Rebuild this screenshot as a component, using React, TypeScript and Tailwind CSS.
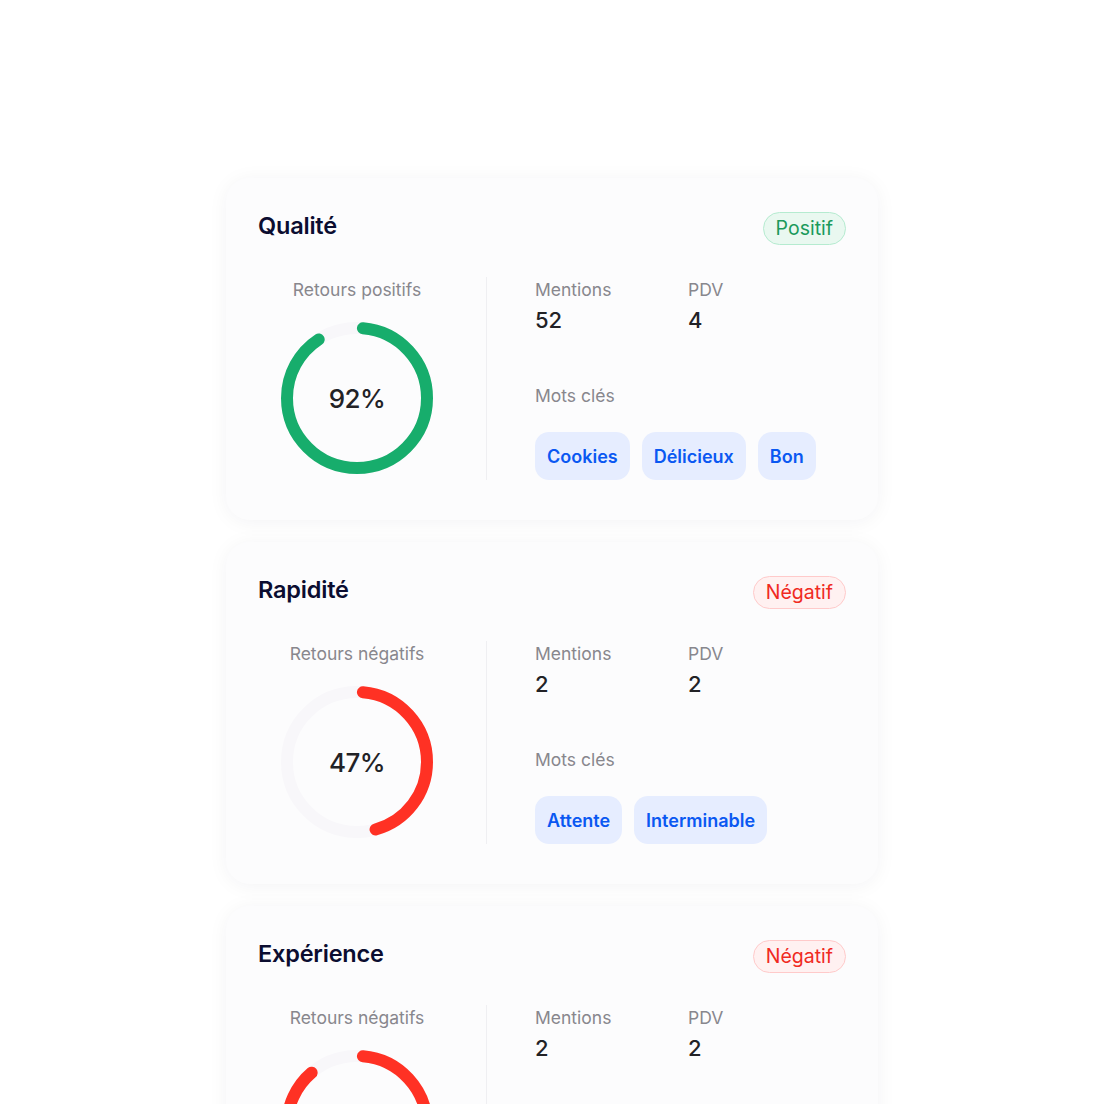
type Card = {
	title: string
	tone: "pos" | "neg"
	label: string
	percent: number
	mentions: number
	pdv: number
	keywords: string[]
}

const cards: Card[] = [
	{ title: "Qualité", tone: "pos", label: "Retours positifs", percent: 92, mentions: 52, pdv: 4, keywords: ["Cookies", "Délicieux", "Bon"] },
	{ title: "Rapidité", tone: "neg", label: "Retours négatifs", percent: 47, mentions: 2, pdv: 2, keywords: ["Attente", "Interminable"] },
	{ title: "Expérience", tone: "neg", label: "Retours négatifs", percent: 90, mentions: 2, pdv: 2, keywords: ["Attente"] },
]

function Donut({ percent, color }: { percent: number; color: string }) {
	const r = 70
	const c = 2 * Math.PI * r
	// keep the round caps inside the percent span
	const cap = 6
	const len = (c * percent) / 100 - 2 * cap
	return (
		<div className="relative w-[152px] h-[152px]">
			<svg width="152" height="152" viewBox="0 0 152 152" className="-rotate-90">
				<circle cx="76" cy="76" r={r} fill="none" stroke="#f8f7fa" strokeWidth="12" />
				<circle
					cx="76"
					cy="76"
					r={r}
					fill="none"
					stroke={color}
					strokeWidth="12"
					strokeLinecap="round"
					strokeDasharray={`${len} ${c}`}
					strokeDashoffset={-cap}
				/>
			</svg>
			<div className="absolute inset-0 flex items-center justify-center text-[26px] font-medium tracking-[-0.5px] text-[#222226]">
				{percent}%
			</div>
		</div>
	)
}

function SentimentCard({ card }: { card: Card }) {
	const pos = card.tone === "pos"
	return (
		<div className="h-[342px] shrink-0 rounded-3xl bg-[#fcfcfd] shadow-[0_2px_20px_rgba(20,20,60,0.05)] px-8 pt-[34px]">
			<div className="flex items-start justify-between">
				<h2 className="text-[23.5px] leading-[28px] font-semibold tracking-[-0.2px] text-[#0b0d30]">{card.title}</h2>
				<span
					className={
						pos
							? "h-[33px] px-3 flex items-center rounded-full border border-[#b5ebd0] bg-[#e9f8f0] text-[19.5px] text-[#1b9a5c]"
							: "h-[33px] px-3 flex items-center rounded-full border border-[#ffcaca] bg-[#fff1f1] text-[19.5px] text-[#f02a1f]"
					}
				>
					{pos ? "Positif" : "Négatif"}
				</span>
			</div>

			<div className="mt-8 flex h-[203px]">
				<div className="w-[198px] flex flex-col items-center pt-px">
					<span className="text-[17.5px] leading-6 text-[#88878d]">{card.label}</span>
					<div className="mt-5">
						<Donut percent={card.percent} color={pos ? "#17ad6c" : "#ff3124"} />
					</div>
				</div>

				<div className="ml-[30px] w-px bg-[#efeff2]" />

				<div className="pl-12 pt-px flex flex-col">
					<div className="flex">
						<div className="w-[153px]">
							<div className="text-[17.5px] leading-6 text-[#88878d]">Mentions</div>
							<div className="mt-1 text-[22px] leading-7 font-medium text-[#222226]">{card.mentions}</div>
						</div>
						<div>
							<div className="text-[17.5px] leading-6 text-[#88878d]">PDV</div>
							<div className="mt-1 text-[22px] leading-7 font-medium text-[#222226]">{card.pdv}</div>
						</div>
					</div>
					<div className="mt-[50px] text-[17.5px] leading-6 text-[#88878d]">Mots clés</div>
					<div className="mt-6 flex gap-3">
						{card.keywords.map((k) => (
							<span
								key={k}
								className="h-12 px-3 flex items-center rounded-[14px] bg-[#e6edff] text-[18px] font-semibold text-[#0a58f2]"
							>
								{k}
							</span>
						))}
					</div>
				</div>
			</div>
		</div>
	)
}

export default function App() {
	return (
		<div className="h-[1104px] overflow-hidden bg-white font-['Inter',sans-serif]">
			<div className="w-[652px] mx-auto pt-[178px] flex flex-col gap-[22px]">
				{cards.map((card) => (
					<SentimentCard key={card.title} card={card} />
				))}
			</div>
		</div>
	)
}
